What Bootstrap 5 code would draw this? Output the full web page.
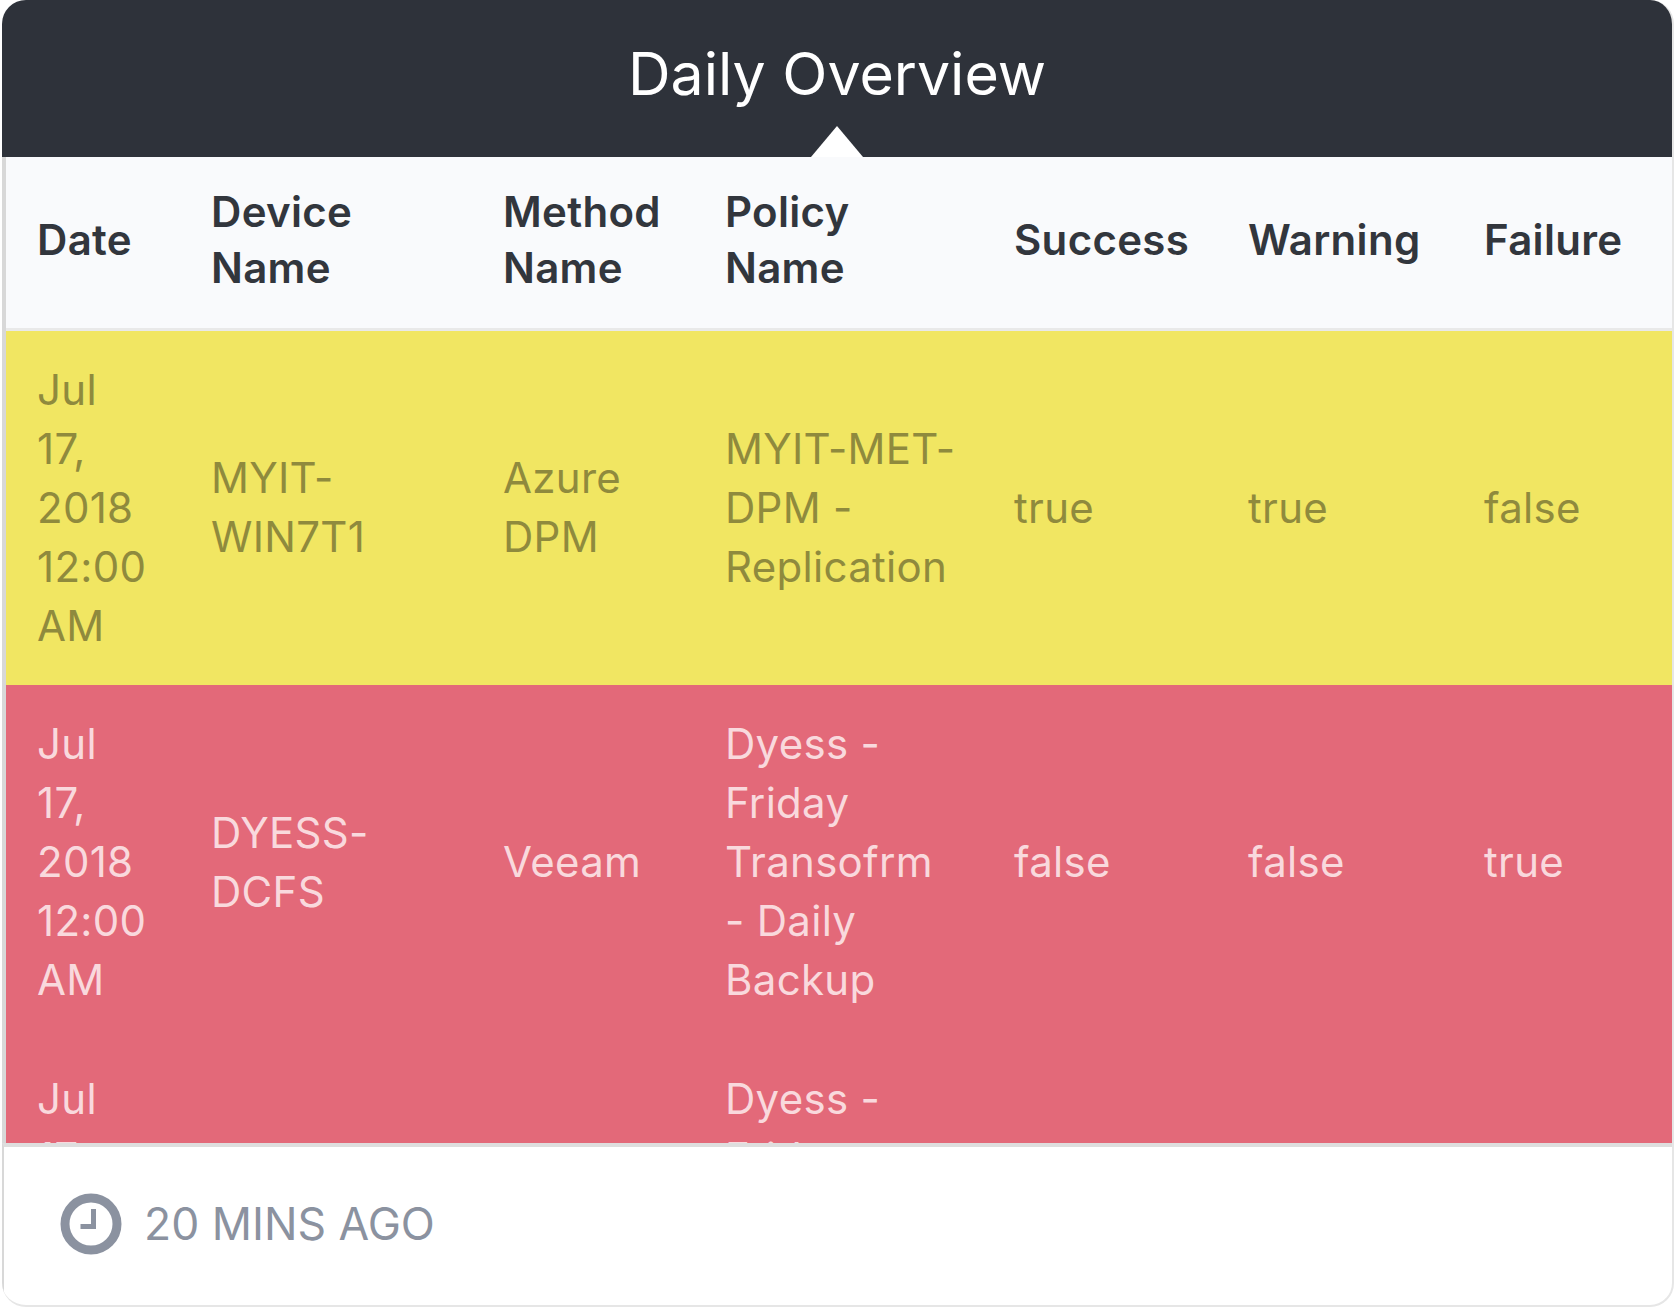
<!DOCTYPE html>
<html lang="en">
<head>
<meta charset="utf-8">
<title>Daily Overview</title>
<link href="https://cdn.jsdelivr.net/npm/bootstrap@5.3.0/dist/css/bootstrap.min.css" rel="stylesheet">
<style>
html,body{margin:0;height:100%;background:#fff;font-family:Inter,"Liberation Sans",sans-serif}
.ov-card{width:1672px;height:1307px;margin-left:2px;border-radius:24px;border:0;border-bottom:2px solid #e6e6e6;border-right:2px solid #e6e6e6;overflow:hidden;background:#fff}
.ov-head{height:157px;background:#2e323a;color:#fff;font-size:59px;line-height:1;position:relative;padding-top:44px;flex:none}
.ov-head::after{content:"";position:absolute;left:809px;bottom:0;border-left:26px solid transparent;border-right:26px solid transparent;border-bottom:31px solid #fff}
.ov-scroll{height:986px;overflow:hidden;border-left:4px solid #d8d8d8;flex:none}
.ov-table{table-layout:fixed;width:1668px;margin:0;border-collapse:collapse}
.ov-table>:not(caption)>*>*{padding:29px 26px 30.5px 31px;box-shadow:none;background:transparent;border:0;vertical-align:middle}
.ov-table>thead>tr>th{background:#f9fafc;color:#32363d;font-size:42px;font-weight:600;letter-spacing:.3px;line-height:56px;height:172px;padding:26px 10px 30px 31px;border-bottom:3px solid #e9e9e9}
.ov-table tbody td{font-size:42px;letter-spacing:.3px;line-height:59px}
.ov-warn td{background:#f1e662!important;color:#8f8a3d!important}
.ov-fail td{background:#e36979!important;color:#f9d9dd!important}
.ov-foot{flex:1;border-top:4px solid #dedede;border-left:2px solid #d8d8d8;padding-left:58px;padding-bottom:4px;color:#8b92a0;font-size:44.5px;gap:22px}
.ov-clock{width:62px;height:62px;flex:none;margin-left:-2px}
.c1{width:174px}.c2{width:292px}.c3{width:222px}.c4{width:289px}.c5{width:234px}.c6{width:236px}.c7{width:221px}
</style>
</head>
<body>
<div class="card ov-card d-flex flex-column">
  <div class="ov-head text-center">Daily Overview</div>
  <div class="ov-scroll">
    <table class="table ov-table">
      <colgroup><col class="c1"><col class="c2"><col class="c3"><col class="c4"><col class="c5"><col class="c6"><col class="c7"></colgroup>
      <thead><tr><th>Date</th><th>Device Name</th><th>Method Name</th><th>Policy Name</th><th>Success</th><th>Warning</th><th>Failure</th></tr></thead>
      <tbody>
        <tr class="ov-warn"><td>Jul 17, 2018 12:00 AM</td><td>MYIT-WIN7T1</td><td>Azure DPM</td><td>MYIT-MET-DPM - Replication</td><td>true</td><td>true</td><td>false</td></tr>
        <tr class="ov-fail"><td>Jul 17, 2018 12:00 AM</td><td>DYESS-DCFS</td><td>Veeam</td><td>Dyess - Friday Transofrm - Daily Backup</td><td>false</td><td>false</td><td>true</td></tr>
        <tr class="ov-fail"><td>Jul 17, 2018 12:00 AM</td><td>DYESS-DCFS</td><td>Veeam</td><td>Dyess - Friday Transofrm - Daily Backup</td><td>false</td><td>false</td><td>true</td></tr>
      </tbody>
    </table>
  </div>
  <div class="ov-foot d-flex align-items-center">
    <svg class="ov-clock" viewBox="0 0 62 62" fill="none" stroke="#8b92a0"><circle cx="31" cy="31" r="26" stroke-width="9"/><path d="M33.5 16v17.5H20.5" stroke-width="5"/></svg>
    <span>20 MINS AGO</span>
  </div>
</div>
<script src="https://cdn.jsdelivr.net/npm/bootstrap@5.3.0/dist/js/bootstrap.bundle.min.js"></script>
</body>
</html>
